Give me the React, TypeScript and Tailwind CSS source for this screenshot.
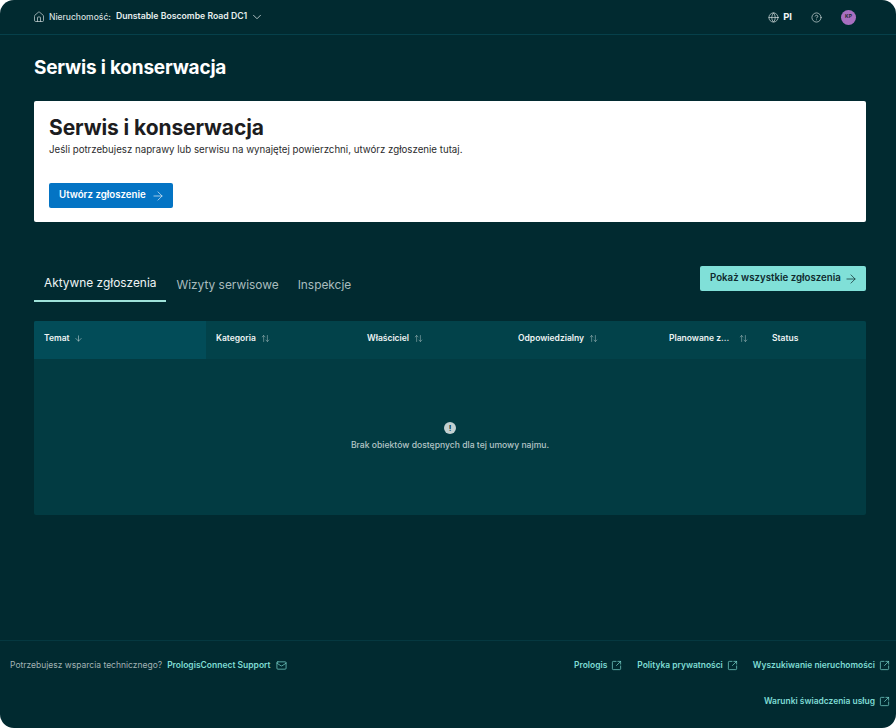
import { ArrowDown, ArrowRight, ArrowUpDown, ChevronDown, CircleHelp, Globe, Home, Mail, SquareArrowOutUpRight } from 'lucide-react'

const COLUMNS = [
  { label: 'Kategoria', width: 'w-[151px]', gap: 'ml-[5px]' },
  { label: 'Właściciel', width: 'w-[151px]', gap: 'ml-[5px]' },
  { label: 'Odpowiedzialny', width: 'w-[151px]', gap: 'ml-[5px]' },
  { label: 'Planowane z...', width: 'w-[103px]', gap: 'ml-[10px]' },
]

const LINKS = ['Prologis', 'Polityka prywatności', 'Wyszukiwanie nieruchomości']

function FooterLink({ label }: { label: string }) {
  return (
    <a className="flex items-center gap-[4px] text-[8.45px] font-semibold text-[#7fdcd4]">
      {label}
      <SquareArrowOutUpRight size={11} strokeWidth={1.5} />
    </a>
  )
}

export default function App() {
  return (
    <div className="bg-white font-['Inter',sans-serif]">
      <div className="flex h-[728px] w-[896px] flex-col overflow-hidden rounded-[14px] bg-[#012a30]">
        {/* Top bar */}
        <header className="flex h-[35px] shrink-0 items-center justify-between border-b border-[#06404a] pl-[33px] pr-[40px]">
          <div className="flex items-center text-[8.7px] font-semibold text-[#e6eeee]">
            <Home size={12} strokeWidth={1.5} className="mr-[4px] text-[#c4d0d1]" />
            <span className="mr-[5px] text-[8.5px] font-medium text-[#d5dfdf]">Nieruchomość:</span>
            <span>Dunstable Boscombe Road DC1</span>
            <ChevronDown size={14} strokeWidth={1.5} className="ml-[3px] text-[#c4d0d1]" />
          </div>
          <div className="flex items-center">
            <Globe size={11} strokeWidth={1.5} className="mr-[4px] text-[#d5dfdf]" />
            <span className="mr-[19px] text-[9.5px] font-bold text-[#f0f5f5]">PI</span>
            <CircleHelp size={11} strokeWidth={1.5} className="mr-[19px] text-[#d5dfdf]" />
            <div className="flex h-[15px] w-[15px] items-center justify-center rounded-full bg-[#a86fc0] text-[5px] font-bold text-[#1d2a2c]">KP</div>
          </div>
        </header>

        <main className="flex-1 px-[30px] pl-[34px]">
          <h1 className="mt-[21px] text-[19px] leading-[24px] font-bold tracking-[-0.2px] text-white">Serwis i konserwacja</h1>

          {/* Hero card */}
          <section className="mt-[21px] h-[121px] rounded-[2px] bg-white px-[15px] pt-[14px]">
            <h2 className="text-[21px] leading-[26px] font-bold tracking-[-0.1px] text-[#1d1d1f]">Serwis i konserwacja</h2>
            <p className="mt-[2px] text-[9.7px] leading-[14px] text-[#2b2b2d]">Jeśli potrzebujesz naprawy lub serwisu na wynajętej powierzchni, utwórz zgłoszenie tutaj.</p>
            <button className="mt-[26px] flex h-[25px] w-[124px] items-center rounded-[2px] bg-[#0474c4] pl-[10px] text-[9.7px] font-semibold text-white">
              Utwórz zgłoszenie
              <ArrowRight size={14} strokeWidth={1.25} className="ml-[5px] text-[#dbeaf6]" />
            </button>
          </section>

          {/* Tabs */}
          <div className="mt-[44px] flex h-[36px] items-start justify-between">
            <div className="flex items-start text-[11.9px] leading-[36px]">
              <div className="h-[36px] border-b-[2px] border-[#9fe3da] px-[10px] leading-[34px] text-[#eef4f4]">Aktywne zgłoszenia</div>
              <div className="ml-[10px] mt-[1px] text-[#a9bcbe]">Wizyty serwisowe</div>
              <div className="ml-[19px] mt-[1px] text-[#a9bcbe]">Inspekcje</div>
            </div>
            <button className="flex h-[25px] w-[166px] items-center rounded-[2px] bg-[#80e0d8] pl-[10px] text-[9.7px] font-semibold text-[#0f2a2e]">
              Pokaż wszystkie zgłoszenia
              <ArrowRight size={14} strokeWidth={1.25} className="ml-[3px]" />
            </button>
          </div>

          {/* Table */}
          <section className="mt-[19px] h-[194px] overflow-hidden rounded-[2px] bg-[#023b42]">
            <div className="flex h-[38px] items-center bg-[#02424a] text-[8.5px] font-semibold text-[#eef4f4]">
              <div className="flex h-full w-[172px] items-center bg-[#024c58] pb-[4px] pl-[10px]">
                Temat
                <ArrowDown size={9} strokeWidth={1.5} className="ml-[4px] text-[#c9d6d7]" />
              </div>
              <div className="flex pb-[4px] pl-[10px]">
                {COLUMNS.map(col => (
                  <div key={col.label} className={`flex items-center ${col.width}`}>
                    {col.label}
                    <ArrowUpDown size={9} strokeWidth={1.5} className={`${col.gap} text-[#a3b9bb]`} />
                  </div>
                ))}
                <div>Status</div>
              </div>
            </div>
            <div className="flex h-[156px] flex-col items-center pt-[63px]">
              <div className="flex h-[12px] w-[12px] items-center justify-center rounded-full bg-[#c3d0d1] text-[8px] leading-none font-bold text-[#023b42]">!</div>
              <p className="mt-[5px] text-[8.6px] leading-[12px] font-medium text-[#b4c5c6]">Brak obiektów dostępnych dla tej umowy najmu.</p>
            </div>
          </section>
        </main>

        {/* Footer */}
        <footer className="h-[88px] shrink-0 border-t border-[#053840] pl-[10px] pr-[6px] pt-[18px]">
          <div className="flex items-center justify-between">
            <div className="flex items-center text-[8.5px]">
              <span className="text-[#a3b3b4]">Potrzebujesz wsparcia technicznego?</span>
              <span className="ml-[5px] font-semibold text-[#7fdcd4]">PrologisConnect Support</span>
              <Mail size={11} strokeWidth={1.5} className="ml-[5px] text-[#7fdcd4]" />
            </div>
            <div className="flex items-center gap-[15px]">
              {LINKS.map(l => <FooterLink key={l} label={l} />)}
            </div>
          </div>
          <div className="mt-[23px] flex justify-end">
            <FooterLink label="Warunki świadczenia usług" />
          </div>
        </footer>
      </div>
    </div>
  )
}
